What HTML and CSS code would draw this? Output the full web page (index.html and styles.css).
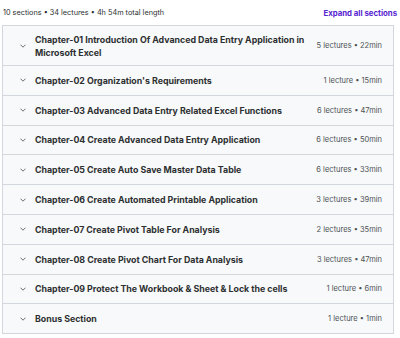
FILE: index.html
```html
<!DOCTYPE html>
<html>
<head>
<meta charset="utf-8">
<link rel="stylesheet" href="styles.css">
</head>
<body>
<div class="page">
  <div class="header">
    <span class="summary">10 sections • 34 lectures • 4h 54m total length</span>
    <span class="expand">Expand all sections</span>
  </div>
  <div class="list">
    <div class="row">
      <svg class="chev" viewBox="0 0 6 4"><polyline points="0.5,0.7 3,3.2 5.5,0.7"/></svg>
      <span class="title">Chapter-01 Introduction Of Advanced Data Entry Application in Microsoft Excel</span>
      <span class="meta">5 lectures • 22min</span>
    </div>
    <div class="row">
      <svg class="chev" viewBox="0 0 6 4"><polyline points="0.5,0.7 3,3.2 5.5,0.7"/></svg>
      <span class="title">Chapter-02 Organization's Requirements</span>
      <span class="meta">1 lecture • 15min</span>
    </div>
    <div class="row">
      <svg class="chev" viewBox="0 0 6 4"><polyline points="0.5,0.7 3,3.2 5.5,0.7"/></svg>
      <span class="title">Chapter-03 Advanced Data Entry Related Excel Functions</span>
      <span class="meta">6 lectures • 47min</span>
    </div>
    <div class="row">
      <svg class="chev" viewBox="0 0 6 4"><polyline points="0.5,0.7 3,3.2 5.5,0.7"/></svg>
      <span class="title">Chapter-04 Create Advanced Data Entry Application</span>
      <span class="meta">6 lectures • 50min</span>
    </div>
    <div class="row">
      <svg class="chev" viewBox="0 0 6 4"><polyline points="0.5,0.7 3,3.2 5.5,0.7"/></svg>
      <span class="title">Chapter-05 Create Auto Save Master Data Table</span>
      <span class="meta">6 lectures • 33min</span>
    </div>
    <div class="row">
      <svg class="chev" viewBox="0 0 6 4"><polyline points="0.5,0.7 3,3.2 5.5,0.7"/></svg>
      <span class="title">Chapter-06 Create Automated Printable Application</span>
      <span class="meta">3 lectures • 39min</span>
    </div>
    <div class="row">
      <svg class="chev" viewBox="0 0 6 4"><polyline points="0.5,0.7 3,3.2 5.5,0.7"/></svg>
      <span class="title">Chapter-07 Create Pivot Table For Analysis</span>
      <span class="meta">2 lectures • 35min</span>
    </div>
    <div class="row">
      <svg class="chev" viewBox="0 0 6 4"><polyline points="0.5,0.7 3,3.2 5.5,0.7"/></svg>
      <span class="title">Chapter-08 Create Pivot Chart For Data Analysis</span>
      <span class="meta">3 lectures • 47min</span>
    </div>
    <div class="row">
      <svg class="chev" viewBox="0 0 6 4"><polyline points="0.5,0.7 3,3.2 5.5,0.7"/></svg>
      <span class="title">Chapter-09 Protect The Workbook &amp; Sheet &amp; Lock the cells</span>
      <span class="meta">1 lecture • 6min</span>
    </div>
    <div class="row">
      <svg class="chev" viewBox="0 0 6 4"><polyline points="0.5,0.7 3,3.2 5.5,0.7"/></svg>
      <span class="title">Bonus Section</span>
      <span class="meta">1 lecture • 1min</span>
    </div>
  </div>
</div>
</body>
</html>
```
FILE: styles.css
```css
* { box-sizing: border-box; }
html, body { margin: 0; padding: 0; background: #fff; }
body { font-family: Inter, "Noto Sans", "Liberation Sans", sans-serif; color: #2d2f31; }
.page { padding: 0 3px 0 2px; }
.header {
  height: 25px;
  display: flex;
  align-items: center;
  justify-content: space-between;
  padding-left: 1px;
}
.summary { font-size: 7.3px; color: #2d2f31; }
.expand { font-size: 7.8px; font-weight: 700; color: #5624d0; }
.list {
  border: 1px solid #d1d7dc;
  width: 392px;
}
.row {
  display: flex;
  align-items: center;
  min-height: 29.8px;
  padding: 6.5px 11px 6.5px 17px;
  background: #f7f9fa;
  border-top: 1px solid #d1d7dc;
}
.row:first-child { border-top: none; min-height: 39px; }
.chev {
  width: 6px;
  height: 4px;
  flex: none;
  margin-right: 9px;
  fill: none;
  stroke: #6a6f73;
  stroke-width: 1;
}
.title {
  flex: 1;
  font-size: 8.8px;
  font-weight: 700;
  line-height: 13px;
  padding-right: 12px;
}
.meta {
  flex: none;
  font-size: 7.5px;
  color: #4d5155;
  line-height: 13px;
}
```
